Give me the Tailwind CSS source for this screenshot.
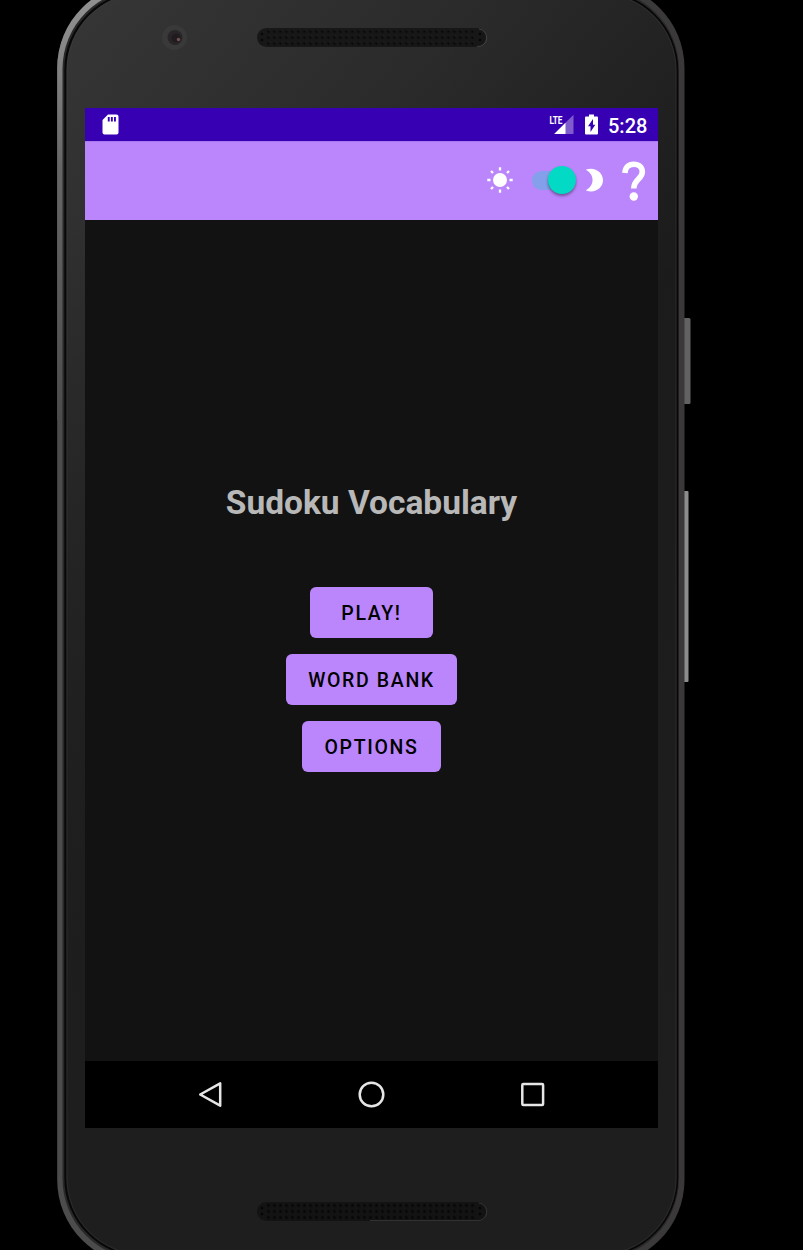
<!DOCTYPE html>
<html lang="en">
<head>
<meta charset="utf-8">
<title>Sudoku Vocabulary</title>
<script src="https://cdn.jsdelivr.net/npm/@tailwindcss/browser@4"></script>
</head>
<body class="bg-black">
<div class="relative w-[803px] h-[1250px] overflow-hidden bg-black font-['Roboto',sans-serif]">
  <!-- Device shell -->
  <svg class="absolute inset-0" width="803" height="1250" viewBox="0 0 803 1250" fill="none">
    <defs>
      <linearGradient id="rim" gradientUnits="userSpaceOnUse" x1="57" y1="0" x2="686" y2="0">
        <stop offset="0" stop-color="#4c4c4c"/><stop offset=".15" stop-color="#4a4a4a"/><stop offset="1" stop-color="#3a3839"/>
      </linearGradient>
      <linearGradient id="shine" gradientUnits="userSpaceOnUse" x1="0" y1="0" x2="0" y2="420">
        <stop offset="0" stop-color="#909090"/><stop offset=".12" stop-color="#868686"/><stop offset=".4" stop-color="#666"/><stop offset="1" stop-color="#4c4c4c"/>
      </linearGradient>
      <linearGradient id="face" gradientUnits="userSpaceOnUse" x1="100" y1="0" x2="560" y2="400">
        <stop offset="0" stop-color="#353536"/><stop offset=".45" stop-color="#2b2b2b"/><stop offset="1" stop-color="#1b1b1b"/>
      </linearGradient>
      <linearGradient id="low" gradientUnits="userSpaceOnUse" x1="0" y1="200" x2="0" y2="1128">
        <stop offset="0" stop-color="#1e1e1e" stop-opacity="0"/><stop offset="1" stop-color="#1e1e1e"/>
      </linearGradient>
      <pattern id="holes" x="265.5" y="28.5" width="6" height="6" patternUnits="userSpaceOnUse">
        <circle cx="3" cy="3" r="1.4" fill="#080808"/><circle cx="4" cy="1.700" r=".5" fill="#303030"/>
      </pattern>
      <pattern id="holes2" x="265.5" y="1202.5" width="6" height="6" patternUnits="userSpaceOnUse">
        <circle cx="3" cy="3" r="1.4" fill="#050505"/>
      </pattern>
    </defs>
    <path d="M684 318h5a1.500 1.500 0 0 1 1.500 1.500v83a1.500 1.500 0 0 1-1.500 1.500h-5z" fill="#626262"/>
    <path d="M684 491h3.500a1 1 0 0 1 1 1v189a1 1 0 0 1-1 1H684z" fill="#8d8d8d"/>
    <rect x="57.200" y="-17" width="627.300" height="1282" rx="85" fill="url(#rim)"/>
    <path d="M57.200 420V68A85 85 0 0 1 142.200-17h20v7h-15A84 84 0 0 0 63 70v350z" fill="url(#shine)"/>
    <rect x="62.500" y="-11" width="616.500" height="1270" rx="80" fill="#292929"/>
    <rect x="64.300" y="-9" width="614" height="1266" rx="79" fill="#080808"/>
    <rect x="66.500" y="-7" width="610" height="1262" rx="77" fill="url(#face)"/>
    <rect x="66.500" y="-7" width="610" height="1262" rx="77" fill="url(#low)"/>
    <rect x="67" y="-6.500" width="609" height="1261" rx="76.500" stroke="#444" stroke-opacity=".35"/>
    <circle cx="174.500" cy="37.500" r="12.500" fill="#393939"/>
    <circle cx="175" cy="37.500" r="7.500" fill="#282427"/>
    <circle cx="176" cy="38" r="4.500" fill="#1f1b1f"/>
    <circle cx="178.500" cy="39.500" r="1.700" fill="#6f5254"/>
    <rect x="257" y="28" width="229" height="19" rx="9.500" fill="#171717"/>
    <path d="M479 29a8.500 8.500 0 0 1-2 17.500" stroke="#484848" stroke-width=".8"/>
    <rect x="265.500" y="28.500" width="210" height="18" fill="url(#holes)"/>
    <path d="M262 34h.01M262 40h.01M480 34h.01M480 40h.01" stroke="#060606" stroke-width="2.600" stroke-linecap="round"/>
    <rect x="257" y="1202" width="229" height="19" rx="9.500" fill="#131313"/>
    <path d="M479 1203a8.500 8.500 0 0 1-2 17.500H370" stroke="#3a3a3a" stroke-width=".8"/>
    <rect x="265.500" y="1202.500" width="210" height="18" fill="url(#holes2)"/>
    <path d="M262 1208h.01M262 1214h.01M480 1208h.01M480 1214h.01" stroke="#050505" stroke-width="2.600" stroke-linecap="round"/>
  </svg>

  <!-- Screen -->
  <div class="relative ml-[85px] mt-[108px] w-[573px] h-[1020px] flex flex-col bg-[#121212]">
    <div class="h-[33px] shrink-0 bg-[#3700b3] flex items-center text-white pl-[17px] pr-[11px]">
      <svg width="17" height="21" viewBox="0 0 17 21"><path fill="#fff" fill-rule="evenodd" d="M6 .5h8.500A2 2 0 0 1 16.500 2.500v16a2 2 0 0 1-2 2h-12a2 2 0 0 1-2-2V6zM5.800 3v4.500h1.900V3zm3.100 0v4.500h1.900V3zm3.100 0v4.500h1.900V3z"/></svg>
      <div class="grow"></div>
      <svg class="overflow-visible" width="25" height="21" viewBox="0 0 25 21">
        <path d="M24.500 .8v19.200H5.200z" fill="#fff" fill-opacity=".36"/>
        <path d="M16.500 8.700V20H5.200z" fill="#fff"/>
        <path d="M0-1h14v11H0z" fill="#3700b3"/>
        <text transform="translate(.5 9.600) scale(.72 1)" x="0" y="0" font-family="Roboto" font-size="11.500" font-weight="700" fill="#fff" textLength="18" lengthAdjust="spacing">LTE</text>
      </svg>
      <svg class="ml-[11px]" width="13" height="21" viewBox="0 0 13 21"><path fill="#fff" fill-rule="evenodd" d="M4 .5h5v2h3a1 1 0 0 1 1 1v16a1 1 0 0 1-1 1H1a1 1 0 0 1-1-1v-16a1 1 0 0 1 1-1h3zM8 5L3 12.200h2.500V18l4.800-7.300H8z"/></svg>
      <span class="ml-[10px] text-[20px] leading-none font-medium w-[39px] whitespace-nowrap pt-[2px]">5:28</span>
    </div>
    <div class="h-[78.500px] shrink-0 bg-[#bb86fc] border-t border-[#a777ee] flex items-center pl-[401px] pb-px">
      <svg width="28" height="28" viewBox="-14 -14 28 28" fill="none" stroke="#fff" stroke-width="2.300">
        <circle r="7" fill="#fff" stroke="none"/>
        <path d="M0-12.700v3.200M0 9.500v3.200M-12.700 0h3.200M9.500 0h3.200M-9-9l2 2M7 7L9 9M9-9L7-7M-7 7L-9 9"/>
      </svg>
      <div class="ml-[18px] w-[44px] h-[29px] flex items-center">
        <div class="w-[34px] h-[19px] rounded-full bg-[#85a0eb]"></div>
        <div class="-ml-[18.500px] w-[28px] h-[28px] shrink-0 rounded-full bg-[#03dac5] shadow-[0_2px_3px_rgba(0,0,0,.4)]"></div>
      </div>
      <svg class="ml-[9px]" width="19" height="24" viewBox="0 0 19 24"><path fill="#fff" d="M.8 1.800C9-1.800 18 4 18 12.200S9 26 .8 22.200C9.800 17.500 9.800 6.500 .8 1.800z"/></svg>
      <svg class="ml-[17.500px] mt-[2px]" width="24" height="40" viewBox="0 0 24 40"><path d="M2.900 12C3.200 6.200 6.500 3.200 11.700 3.200S20.300 6.200 20.300 11C20.300 18 11.800 18.500 11.800 27.500" fill="none" stroke="#fff" stroke-width="5.600"/><circle cx="11.800" cy="35.500" r="4.200" fill="#fff"/></svg>
    </div>
    <div class="grow flex flex-col items-center pt-[263px]">
      <h1 class="text-[33.500px] leading-[40px] font-bold text-[#b8b8b8] whitespace-nowrap">Sudoku Vocabulary</h1>
      <button class="mt-[64.500px] w-[122.500px] h-[51px] rounded-[6px] bg-[#bb86fc] text-black text-[19.500px] font-medium tracking-[1.650px] pt-[3px]">PLAY!</button>
      <button class="mt-4 w-[171.500px] h-[51px] rounded-[6px] bg-[#bb86fc] text-black text-[19.500px] font-medium tracking-[1.650px] pt-[3px] whitespace-nowrap">WORD BANK</button>
      <button class="mt-4 w-[138.500px] h-[51px] rounded-[6px] bg-[#bb86fc] text-black text-[19.500px] font-medium tracking-[1.650px] pt-[3px]">OPTIONS</button>
    </div>
    <div class="h-[67px] shrink-0 bg-black flex items-center justify-between pl-[111px] pr-[111px]">
      <svg width="28" height="28" viewBox="0 0 28 28" fill="none" stroke="#e6e6e6" stroke-width="2.500" stroke-linejoin="round"><path d="M24.200 2.400v22.300L4.200 13.500z"/></svg>
      <svg width="28" height="28" viewBox="0 0 28 28" fill="none" stroke="#e6e6e6" stroke-width="2.500"><circle cx="13.500" cy="13.500" r="11.800"/></svg>
      <svg width="28" height="28" viewBox="0 0 28 28" fill="none" stroke="#e6e6e6" stroke-width="2.500"><rect x="3.300" y="3.100" width="20.800" height="20.800" rx="1"/></svg>
    </div>
  </div>
</div>
</body>
</html>
